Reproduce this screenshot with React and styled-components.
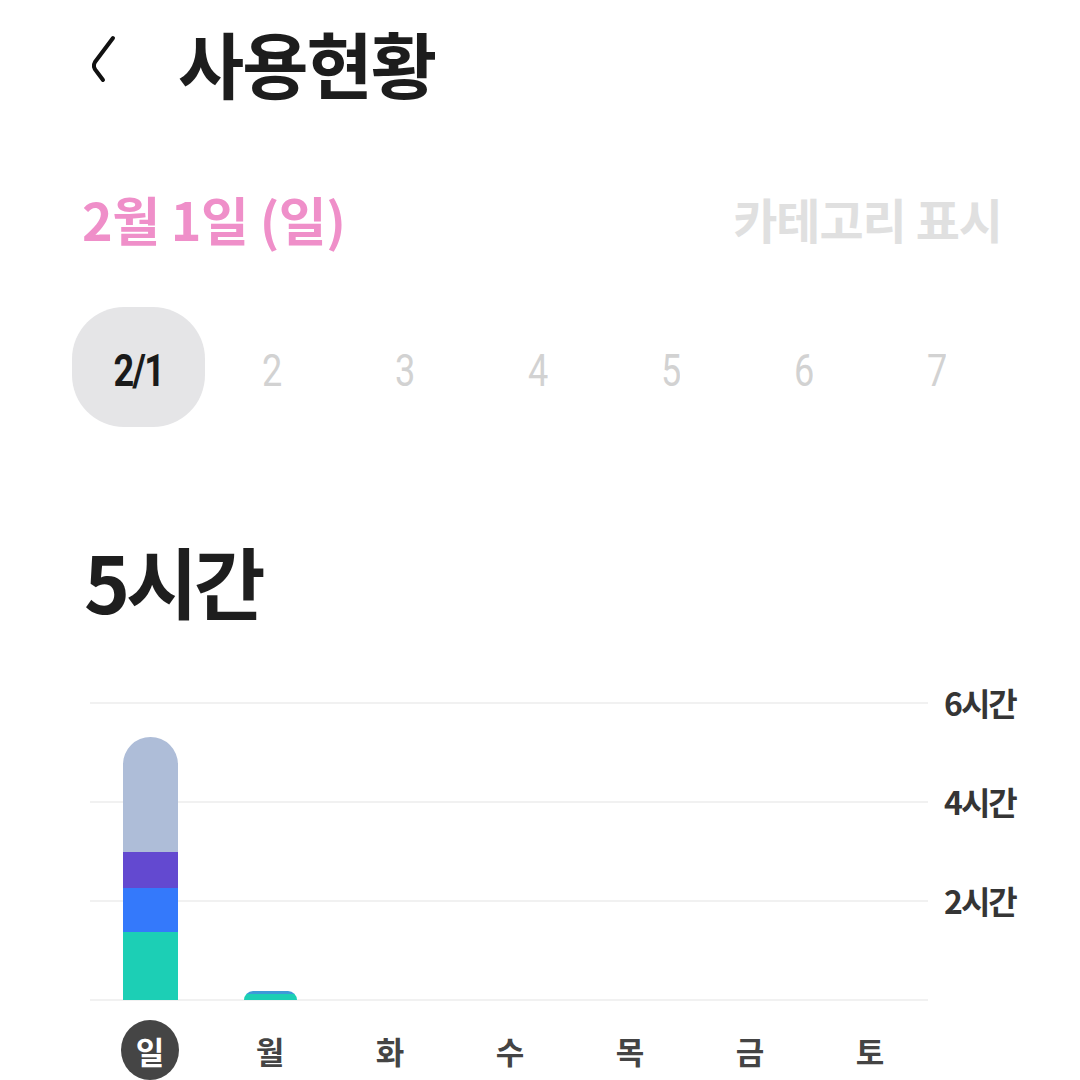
import React from "react";
import styled, { createGlobalStyle } from "styled-components";

const Global = createGlobalStyle`
  html, body { margin: 0; padding: 0; background: #fff; }
  body { font-family: "Noto Sans CJK KR", "Noto Sans", sans-serif; color: #1c1c1c; }
  * { box-sizing: border-box; }
`;

const Page = styled.div`
  width: 1080px;
  height: 1080px;
  overflow: hidden;
  display: flex;
  flex-direction: column;
`;

const Header = styled.header`
  display: flex;
  align-items: center;
  height: 76px;
  margin-top: 24px;
  padding-left: 86px;
`;

const BackButton = styled.button`
  width: 36px;
  height: 60px;
  border: 0;
  background: none;
  padding: 0;
  margin-right: 56px;
  display: flex;
  align-items: center;
  justify-content: center;
`;

const Title = styled.h1`
  margin: 0;
  font-size: 72px;
  line-height: 76px;
  font-weight: 700;
  letter-spacing: -2px;
  color: #1d1d1d;
`;

const DateRow = styled.div`
  display: flex;
  justify-content: space-between;
  align-items: center;
  margin-top: 86px;
  padding: 0 78px 0 82px;
  height: 64px;
`;

const DateTitle = styled.div`
  font-size: 52px;
  font-weight: 700;
  color: #ef8fc9;
  letter-spacing: -0.5px;
`;

const CategoryToggle = styled.div`
  font-size: 48px;
  font-weight: 700;
  color: #e0e0e0;
  letter-spacing: -1px;
`;

const DayPicker = styled.div`
  display: grid;
  grid-template-columns: repeat(7, 133px);
  grid-template-rows: 120px;
  margin-top: 57px;
  padding-left: 72px;
`;

const DayPill = styled.div`
  display: flex;
  align-items: center;
  justify-content: center;
  padding-top: 8px;
  border-radius: 52px;
  background: ${(p) => (p.$active ? "#e5e5e7" : "transparent")};
  color: ${(p) => (p.$active ? "#1a1a1a" : "#d2d2d2")};
  font-family: Roboto, "Noto Sans", sans-serif;
  font-size: 44px;
  font-weight: ${(p) => (p.$active ? 700 : 400)};
  letter-spacing: -2px;
  span { display: inline-block; transform: scaleX(0.82); }
`;

const Total = styled.div`
  margin-top: 108px;
  padding-left: 84px;
  font-size: 78px;
  line-height: 90px;
  font-weight: 700;
  letter-spacing: -4px;
  color: #1e1e1e;
`;

const Chart = styled.div`
  margin-top: 77px;
  display: grid;
  grid-template-columns: 840px 1fr;
  padding-left: 90px;
`;

const Plot = styled.div`
  position: relative;
  height: 300px;
`;

const GridLine = styled.div`
  position: absolute;
  left: 0;
  right: 2px;
  height: 2px;
  background: #f1f1f1;
  top: ${(p) => p.$top}px;
`;

const Bars = styled.div`
  position: absolute;
  inset: 0 0 2px 0;
  display: grid;
  grid-template-columns: repeat(7, 120px);
  align-items: end;
`;

const BarSlot = styled.div`
  display: flex;
  justify-content: center;
  align-items: flex-end;
  height: 100%;
`;

const Bar = styled.div`
  width: ${(p) => p.$w}px;
  display: flex;
  flex-direction: column;
  border-radius: ${(p) => p.$w / 2}px ${(p) => p.$w / 2}px 0 0;
  overflow: hidden;
`;

const Segment = styled.div`
  background: ${(p) => p.$c};
`;

const Axis = styled.div`
  position: relative;
  height: 300px;
`;

const AxisLabel = styled.div`
  position: absolute;
  left: 14px;
  font-size: 32px;
  font-weight: 700;
  color: #353535;
  letter-spacing: -2px;
  line-height: 36px;
  top: ${(p) => p.$top - 18}px;
`;

const Weekdays = styled.div`
  display: grid;
  grid-template-columns: repeat(7, 120px);
  padding-left: 90px;
  margin-top: 18px;
`;

const Weekday = styled.div`
  display: flex;
  justify-content: center;
  align-items: center;
  span {
    width: 58px;
    height: 60px;
    border-radius: 50%;
    display: flex;
    align-items: center;
    justify-content: center;
    font-size: 31px;
    font-weight: 700;
    background: ${(p) => (p.$active ? "#454545" : "transparent")};
    color: ${(p) => (p.$active ? "#fff" : "#444")};
  }
`;

const bars = [
  {
    w: 55,
    segs: [
      ["#aebdd8", 115],
      ["#6349d0", 36],
      ["#3479fb", 44],
      ["#1ccfb5", 68],
    ],
  },
  {
    w: 53,
    segs: [
      ["#3d9ad8", 3],
      ["#1ccfb5", 6],
    ],
  },
];

export default function App() {
  return (
    <Page>
      <Global />
      <Header>
        <BackButton aria-label="back">
          <svg width="34" height="60" viewBox="0 0 34 60">
            <path
              d="M26 6 L8 30 Q5 35 10 40 L16 48"
              fill="none"
              stroke="#111"
              strokeWidth="4"
              strokeLinecap="round"
              strokeLinejoin="round"
            />
          </svg>
        </BackButton>
        <Title>사용현황</Title>
      </Header>
      <DateRow>
        <DateTitle>2월 1일 (일)</DateTitle>
        <CategoryToggle>카테고리 표시</CategoryToggle>
      </DateRow>
      <DayPicker>
        {["2/1", "2", "3", "4", "5", "6", "7"].map((d, i) => (
          <DayPill key={d} $active={i === 0}>
            <span>{d}</span>
          </DayPill>
        ))}
      </DayPicker>
      <Total>5시간</Total>
      <Chart>
        <Plot>
          {[0, 99, 198, 297].map((t) => (
            <GridLine key={t} $top={t} />
          ))}
          <Bars>
            {Array.from({ length: 7 }).map((_, i) => (
              <BarSlot key={i}>
                {bars[i] && (
                  <Bar $w={bars[i].w}>
                    {bars[i].segs.map(([c, h], j) => (
                      <Segment key={j} $c={c} style={{ height: h }} />
                    ))}
                  </Bar>
                )}
              </BarSlot>
            ))}
          </Bars>
        </Plot>
        <Axis>
          <AxisLabel $top={0}>6시간</AxisLabel>
          <AxisLabel $top={99}>4시간</AxisLabel>
          <AxisLabel $top={198}>2시간</AxisLabel>
        </Axis>
      </Chart>
      <Weekdays>
        {["일", "월", "화", "수", "목", "금", "토"].map((d, i) => (
          <Weekday key={d} $active={i === 0}>
            <span>{d}</span>
          </Weekday>
        ))}
      </Weekdays>
    </Page>
  );
}
